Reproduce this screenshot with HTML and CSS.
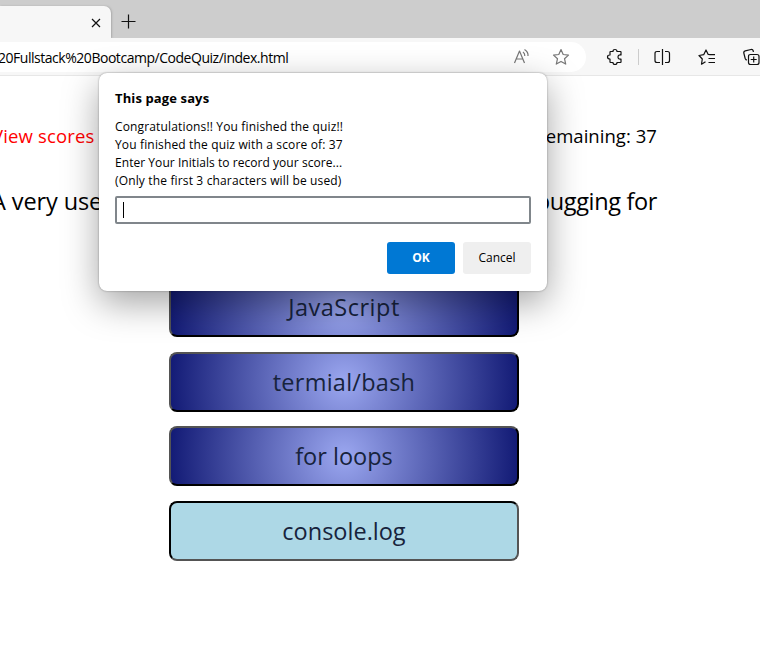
FILE: index.html
```html
<!DOCTYPE html>
<html lang="en">
<head>
<meta charset="utf-8">
<title>Code Quiz</title>
<link rel="stylesheet" href="styles.css">
</head>
<body>
<header class="tabs">
  <div class="tab">
    <svg width="10" height="10" viewBox="0 0 10 10"><path d="M1 1l8 8M9 1L1 9"/></svg>
  </div>
  <svg class="new-tab" width="15" height="15" viewBox="0 0 15 15"><path d="M7.5 .5v14M.5 7.5h14"/></svg>
</header>
<nav class="toolbar">
  <div class="address">
    <span class="url">20Fullstack%20Bootcamp/CodeQuiz/index.html</span>
    <svg class="read" width="18" height="18" viewBox="0 0 18 18"><path d="M1.500 15L6.500 3L11.500 15M3.300 11h6.400M10 4q2 1.500 1.800 4M11.500 1.500q4 2.500 3.500 6.500"/></svg>
    <svg class="star" width="18" height="18" viewBox="0 0 18 18"><path d="M9 1.500l2.200 5 5.300.6-4 3.600 1.200 5.400L9 13.400l-4.700 2.700 1.200-5.400-4-3.600 5.300-.6z"/></svg>
  </div>
  <div class="actions">
    <svg width="18" height="18" viewBox="0 0 18 18"><path d="M4.500 3.500H7Q7 1.500 9 1.500T11 3.500h3.500q.5 0 .5.500v3q-3-.5-3 2t3 2v3q0 .5-.5.500H11Q11 16.500 9 16.500T7 14.500H4.500Q4 14.500 4 14V11Q1.500 11 1.500 9T4 7V4q0-.5.500-.5z"/></svg>
    <i class="divider"></i>
    <svg width="18" height="18" viewBox="0 0 18 18"><path d="M9.500 1v16M7 3.500H4Q2 3.500 2 5.500v7q0 2 2 2h3M12 3.500h2.500q2 0 2 2v7q0 2-2 2H12"/></svg>
    <svg width="18" height="18" viewBox="0 0 18 18"><path d="M7.500 13.700L3.500 16.200l.8-5.200L1 7.500l4.700-.8L8 2l2.200 4.500L12 6.700M10.500 6.700H17M10.500 10.500H17M10.500 14.500H17"/></svg>
    <svg width="18" height="18" viewBox="0 0 18 18"><path d="M4 12Q2.700 12 2.200 10.500L.8 5Q.5 3.300 2.200 2.800L8 1.500Q9.800 1.200 10.300 3v1M7.500 6.500h6.500q2 0 2 2v6q0 2-2 2H7.500q-2 0-2-2v-6q0-2 2-2zM10.700 8.500v6M7.700 11.500h6"/></svg>
  </div>
</nav>
<main class="page">
  <div class="status"><a class="scores">View scores</a><span class="time">Time Remaining: 37</span></div>
  <div class="question"><span>A very useful</span><span class="tail">debugging for</span></div>
  <div class="answers">
    <button class="answer wide">JavaScript</button>
    <button class="answer">termial/bash</button>
    <button class="answer narrow">for loops</button>
    <button class="answer narrow pressed">console.log</button>
  </div>
</main>
<section class="dialog">
  <h1>This page says</h1>
  <p>Congratulations!! You finished the quiz!!</p>
  <p>You finished the quiz with a score of: 37</p>
  <p class="tight">Enter Your Initials to record your score...</p>
  <p>(Only the first 3 characters will be used)</p>
  <div class="field"><i class="caret"></i></div>
  <div class="buttons"><button class="ok">OK</button><button class="cancel">Cancel</button></div>
</section>
</body>
</html>
```
FILE: styles.css
```css
* { box-sizing: border-box; }
body { margin: 0; width: 760px; height: 664px; overflow: hidden; background: #fff; position: relative; font-family: "Open Sans", sans-serif; color: #000; }
svg { fill: none; stroke: #111; stroke-width: 1.2; stroke-linejoin: round; flex: none; display: block; }
.tabs { height: 38px; background: #cdcdcd; display: flex; align-items: flex-end; }
.tab { width: 111px; height: 32px; background: #f7f7f7; border-radius: 0 7px 0 0; display: flex; justify-content: flex-end; padding: 12px 10px 0 0; box-shadow: 1px 0 2px #aaa; }
.new-tab { margin: 0 0 9px 10px; }
.toolbar { height: 38px; background: #f7f7f7; border-bottom: 1px solid #e7e7e7; padding-top: 4px; display: flex; position: relative; }
.address { width: 586px; height: 30px; background: #fff; border-radius: 0 15px 15px 0; display: flex; align-items: center; flex: none; }
.url { font-size: 14px; width: 515px; white-space: nowrap; margin-left: -2px; letter-spacing: -.47px; }
.read, .star { stroke: #777; }
.star { margin-left: 21px; }
.actions { display: flex; align-items: center; height: 30px; margin-left: 20px; flex: none; }
.actions svg + svg { margin-left: 27px; }
.divider { width: 1px; height: 16px; background: #ccc; margin: 0 14px; }
.page { width: 674px; margin-left: -8px; padding: 0 9px 0 0; }
.status { padding-top: 46px; height: 98px; display: flex; justify-content: space-between; font-size: 18.5px; line-height: 28px; letter-spacing: .15px; }
.scores { color: #f00; }
.time { letter-spacing: .05px; }
.question { height: 81px; margin: 9px 0 0 -1px; display: flex; justify-content: space-between; font-size: 23.5px; line-height: 36px; letter-spacing: -.1px; }
.tail { letter-spacing: -.35px; }
.answers { width: 350px; margin: 13px 0 0 177px; display: flex; flex-direction: column; gap: 14.7px; }
.answer { height: 60px; padding: 0; border: 2px outset #000; border-radius: 8px; font: 23.5px/36px "Open Sans", sans-serif; letter-spacing: .25px; color: #17233c; background: radial-gradient(circle at center, #9ba7f0, #121a75); }
.answer.wide { letter-spacing: .5px; }
.answer.narrow { letter-spacing: 0; }
.answer.pressed { background: #add8e6; border-style: inset; }
.dialog { position: absolute; left: 99px; top: 73px; width: 448px; height: 218px; padding: 15px 16px 16px; background: #fff; border-radius: 8px; box-shadow: 0 0 2px rgba(0,0,0,.4), 0 12px 36px rgba(0,0,0,.36); }
.dialog h1 { margin: 0 0 10px; font-size: 13px; line-height: 20px; font-weight: 700; letter-spacing: .12px; }
.dialog p { margin: 0; font-size: 12px; line-height: 18px; letter-spacing: .15px; }
.dialog p.tight { letter-spacing: .05px; }
.field { height: 28px; margin-top: 6px; border: 2px solid #80868b; border-radius: 2px; padding: 4px 6px; }
.caret { display: block; width: 1px; height: 16px; background: #000; }
.buttons { display: flex; justify-content: flex-end; gap: 8px; margin-top: 18px; }
.buttons button { width: 68px; height: 32px; border: 0; border-radius: 3px; font: 12px "Open Sans", sans-serif; padding: 0 0 1px; }
.buttons .ok { background: #0078d4; color: #fff; font-weight: 700; }
.buttons .cancel { background: #efefef; color: #000; }
```
